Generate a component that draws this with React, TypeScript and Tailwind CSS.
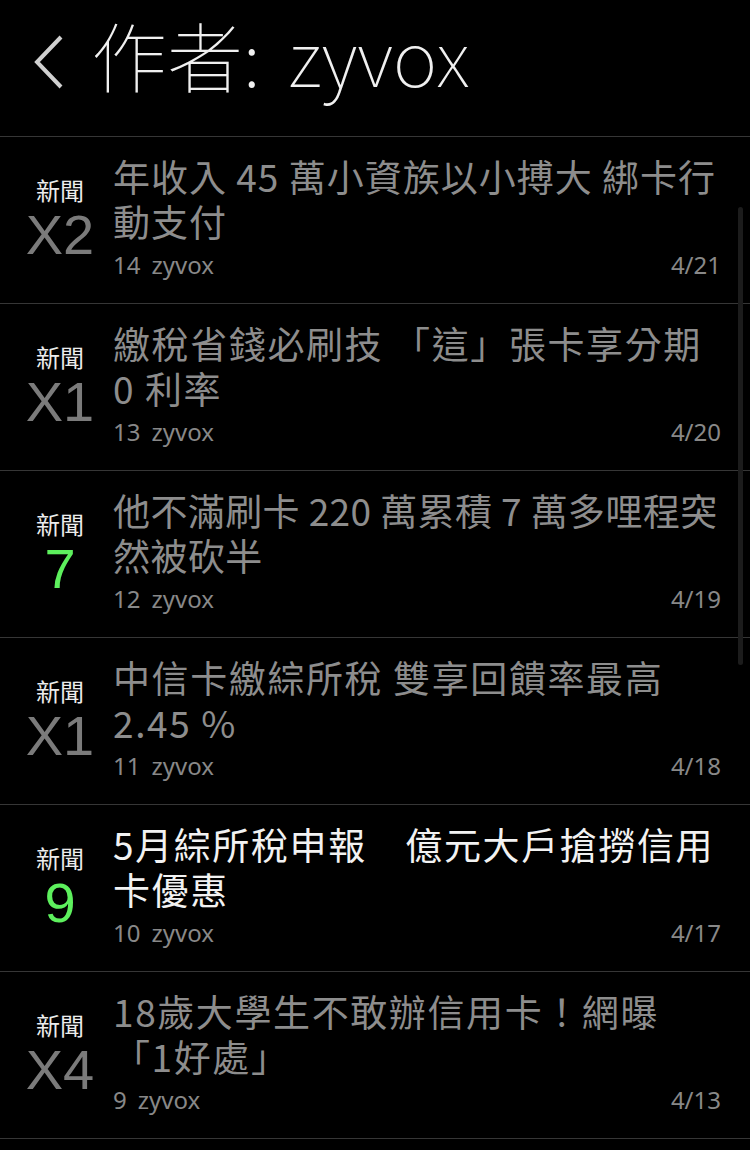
import React from 'react'

interface Post {
  id: number
  count: string
  hot: boolean
  lines: string[]
  push: string
  date: string
  read?: boolean
  track: string
}

const posts: Post[] = [
  { id: 1, count: 'X2', hot: false, lines: ['年收入 45 萬小資族以小搏大 綁卡行', '動支付'], push: '14', date: '4/21', read: true, track: 'tracking-[1px]' },
  { id: 2, count: 'X1', hot: false, lines: ['繳稅省錢必刷技 「這」張卡享分期', '0 利率'], push: '13', date: '4/20', read: true, track: 'tracking-[1.6px]' },
  { id: 3, count: '7', hot: true, lines: ['他不滿刷卡 220 萬累積 7 萬多哩程突', '然被砍半'], push: '12', date: '4/19', read: true, track: 'tracking-[0.4px]' },
  { id: 4, count: 'X1', hot: false, lines: ['中信卡繳綜所稅 雙享回饋率最高', '2.45 %'], push: '11', date: '4/18', read: true, track: 'tracking-[1.6px]' },
  { id: 5, count: '9', hot: true, lines: ['5月綜所稅申報　億元大戶搶撈信用', '卡優惠'], push: '10', date: '4/17', read: false, track: 'tracking-[1.6px]' },
  { id: 6, count: 'X4', hot: false, lines: ['18歲大學生不敢辦信用卡！網曝', '「1好處」'], push: '9', date: '4/13', read: true, track: 'tracking-[1.6px]' },
]

const cjk = "font-['Noto_Sans_CJK_TC','Noto_Sans',sans-serif]"

const PostRow = ({ post }: { post: Post }) => (
  <div className="flex h-[167px] border-b border-[#363636]">
    <div className="ml-[18px] flex w-[84px] shrink-0 flex-col items-center justify-center pt-[2px]">
      <span className={`${cjk} text-[24px] leading-[28px] text-[#ececec]`}>新聞</span>
      <span
        className={`font-['Liberation_Sans',sans-serif] text-[56px] leading-[62px] ${
          post.hot ? 'text-[#5df05d]' : 'text-[#7b7b7b]'
        }`}
      >
        {post.count}
      </span>
    </div>
    <div className="ml-[11px] flex min-w-0 flex-1 flex-col pr-[29px] pt-[17px]">
      <div className={`${cjk} text-[37px] leading-[45px] ${post.track} ${post.read ? 'text-[#8d8d8d]' : 'text-[#f2f2f2]'}`}>
        {post.lines.map((line, i) => (
          <div key={i} className="whitespace-pre">
            {line}
          </div>
        ))}
      </div>
      <div className="mt-[6px] flex items-center justify-between font-['Noto_Sans',sans-serif] text-[24px] leading-[30px] text-[#888888]">
        <span className="flex gap-[11px]">
          <span>{post.push}</span>
          <span>zyvox</span>
        </span>
        <span>{post.date}</span>
      </div>
    </div>
  </div>
)

export default function App() {
  return (
    <div className="relative h-[1150px] w-[750px] overflow-hidden bg-black">
      <header className="flex h-[137px] items-center border-b border-[#363636] pb-[28px]">
        <svg className="ml-[33px] mt-[16px]" width="30" height="54" viewBox="0 0 30 54" fill="none">
          <path d="M28 2 L4 27 L28 52" stroke="#d0d0d0" strokeWidth="4" strokeLinecap="butt" />
        </svg>
        <h1 className={`${cjk} ml-[28px] text-[76px] font-thin leading-none text-[#f0f0f0]`}>
          作者:<span className="ml-[28px]">zyvox</span>
        </h1>
      </header>

      {posts.map((post) => (
        <PostRow key={post.id} post={post} />
      ))}

      <div className="absolute right-[7px] top-[207px] h-[458px] w-[5px] rounded-full bg-[#1c1c1c]" />
    </div>
  )
}
